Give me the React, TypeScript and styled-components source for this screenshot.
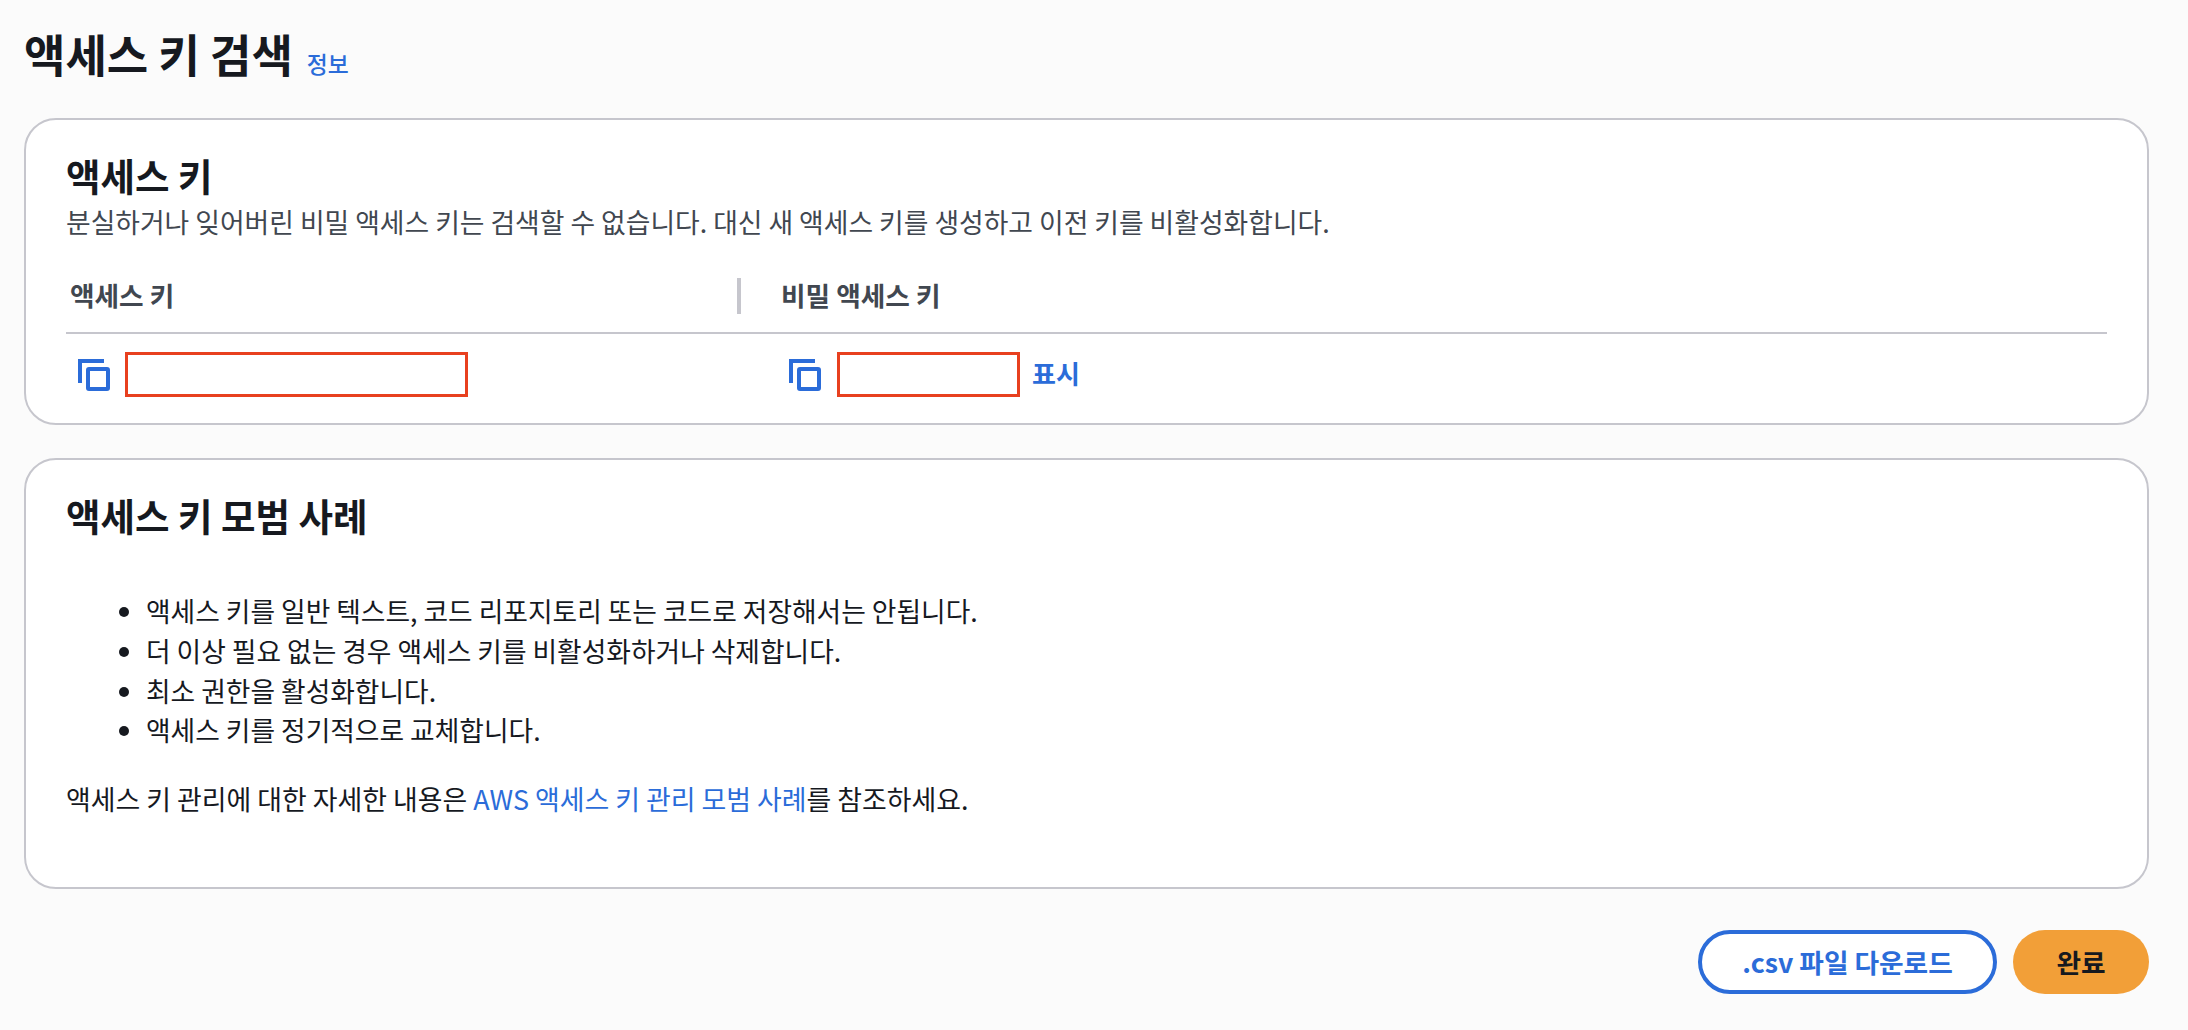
import React from 'react'
import styled, { createGlobalStyle } from 'styled-components'

const GlobalStyle = createGlobalStyle`
  html, body {
    margin: 0;
    padding: 0;
    background: #fbfbfb;
  }
  body {
    font-family: 'Noto Sans CJK KR', 'Noto Sans', sans-serif;
    color: #16191f;
  }
`

const CopyIcon = () => (
  <StyledCopyIcon viewBox="0 0 32 32" fill="none" stroke="#2b6cd9" strokeWidth="4">
    <path d="M2 24V2H26" />
    <rect x="10" y="10" width="20" height="20" rx="1" />
  </StyledCopyIcon>
)

const App = () => {
  return (
    <StyledPage>
      <GlobalStyle />
      <StyledHeader>
        <StyledTitle>액세스 키 검색</StyledTitle>
        <StyledInfo href="#">정보</StyledInfo>
      </StyledHeader>

      <StyledKeyCard>
        <StyledCardTitle>액세스 키</StyledCardTitle>
        <StyledDescription>
          분실하거나 잊어버린 비밀 액세스 키는 검색할 수 없습니다. 대신 새 액세스 키를 생성하고 이전 키를 비활성화합니다.
        </StyledDescription>
        <StyledTableHead>
          <StyledHeadCell $divider>액세스 키</StyledHeadCell>
          <StyledHeadCell $inset>비밀 액세스 키</StyledHeadCell>
        </StyledTableHead>
        <StyledTableRow>
          <StyledKeyCell>
            <CopyIcon />
            <StyledRedacted $width={343} />
          </StyledKeyCell>
          <StyledKeyCell $secret>
            <CopyIcon />
            <StyledRedacted $width={183} />
            <StyledShow href="#">표시</StyledShow>
          </StyledKeyCell>
        </StyledTableRow>
      </StyledKeyCard>

      <StyledPracticeCard>
        <StyledCardTitle>액세스 키 모범 사례</StyledCardTitle>
        <StyledList>
          <li>액세스 키를 일반 텍스트, 코드 리포지토리 또는 코드로 저장해서는 안됩니다.</li>
          <li>더 이상 필요 없는 경우 액세스 키를 비활성화하거나 삭제합니다.</li>
          <li>최소 권한을 활성화합니다.</li>
          <li>액세스 키를 정기적으로 교체합니다.</li>
        </StyledList>
        <StyledParagraph>
          액세스 키 관리에 대한 자세한 내용은 <StyledLink href="#">AWS 액세스 키 관리 모범 사례</StyledLink>를 참조하세요.
        </StyledParagraph>
      </StyledPracticeCard>

      <StyledActions>
        <StyledOutlineButton>.csv 파일 다운로드</StyledOutlineButton>
        <StyledPrimaryButton>완료</StyledPrimaryButton>
      </StyledActions>
    </StyledPage>
  )
}

const StyledPage = styled.div`
  box-sizing: border-box;
  height: 1030px;
  padding: 0 39px 0 24px;
  overflow: hidden;
`

const StyledHeader = styled.div`
  display: flex;
  align-items: flex-end;
  height: 118px;
  padding-bottom: 36px;
  box-sizing: border-box;
  gap: 14px;
`

const StyledTitle = styled.h1`
  margin: 0;
  font-size: 45px;
  line-height: 56px;
  font-weight: 700;
  color: #16191f;
`

const StyledInfo = styled.a`
  font-size: 22.8px;
  line-height: 30px;
  margin-bottom: 3px;
  font-weight: 500;
  color: #2b6cd9;
  text-decoration: none;
`

const StyledCard = styled.section`
  box-sizing: border-box;
  background: #fff;
  border: 2px solid #c6c6cd;
  border-radius: 32px;
  padding: 0 40px;
`

const StyledKeyCard = styled(StyledCard)`
  height: 307px;
  padding-top: 32px;
`

const StyledPracticeCard = styled(StyledCard)`
  height: 431px;
  margin-top: 33px;
  padding-top: 32px;
`

const StyledCardTitle = styled.h2`
  margin: 0;
  font-size: 37.5px;
  line-height: 46px;
  font-weight: 700;
  color: #16191f;
`

const StyledDescription = styled.p`
  margin: 8px 0 0;
  font-size: 26.8px;
  line-height: 32px;
  color: #414750;
`

const StyledTableHead = styled.div`
  display: grid;
  grid-template-columns: 675px 1fr;
  margin-top: 40px;
  padding-bottom: 18px;
  border-bottom: 2px solid #c6c6cd;
`

const StyledHeadCell = styled.div<{ $divider?: boolean; $inset?: boolean }>`
  box-sizing: border-box;
  height: 36px;
  font-size: 26.7px;
  line-height: 34px;
  font-weight: 700;
  color: #414750;
  padding-left: ${(props) => (props.$inset ? '40px' : '4px')};
  border-right: ${(props) => (props.$divider ? '4px solid #c6c6cd' : 'none')};
`

const StyledTableRow = styled.div`
  display: grid;
  grid-template-columns: 675px 1fr;
  padding-top: 18px;
`

const StyledKeyCell = styled.div<{ $secret?: boolean }>`
  display: flex;
  align-items: center;
  padding-left: ${(props) => (props.$secret ? '48px' : '12px')};
  gap: ${(props) => (props.$secret ? '16px' : '15px')};
`

const StyledCopyIcon = styled.svg`
  width: 32px;
  height: 32px;
  flex-shrink: 0;
`

const StyledRedacted = styled.div<{ $width: number }>`
  box-sizing: border-box;
  width: ${(props) => props.$width}px;
  height: 45px;
  border: 3px solid #e8401f;
  background: #fff;
`

const StyledShow = styled.a`
  margin: 0 0 5px -4px;
  font-size: 26px;
  font-weight: 700;
  color: #2b6cd9;
  text-decoration: none;
`

const StyledList = styled.ul`
  margin: 53px 0 0;
  padding: 0 0 0 80px;
  font-size: 26.75px;
  line-height: 39.8px;
  color: #16191f;
`

const StyledParagraph = styled.p`
  margin: 29px 0 0;
  font-size: 26.9px;
  line-height: 40px;
  color: #16191f;
`

const StyledLink = styled.a`
  color: #2b6cd9;
  text-decoration: none;
`

const StyledActions = styled.div`
  display: flex;
  justify-content: flex-end;
  gap: 16px;
  margin-top: 41px;
`

const StyledOutlineButton = styled.button`
  box-sizing: border-box;
  width: 299px;
  height: 64px;
  padding-bottom: 3px;
  border: 4px solid #2b6cd9;
  border-radius: 32px;
  background: #fff;
  color: #2b6cd9;
  font-family: inherit;
  font-size: 26.7px;
  font-weight: 700;
`

const StyledPrimaryButton = styled.button`
  box-sizing: border-box;
  width: 136px;
  height: 64px;
  padding-bottom: 3px;
  border: none;
  border-radius: 32px;
  background: #f29f38;
  color: #16191f;
  font-family: inherit;
  font-size: 26.7px;
  font-weight: 700;
`

export default App
